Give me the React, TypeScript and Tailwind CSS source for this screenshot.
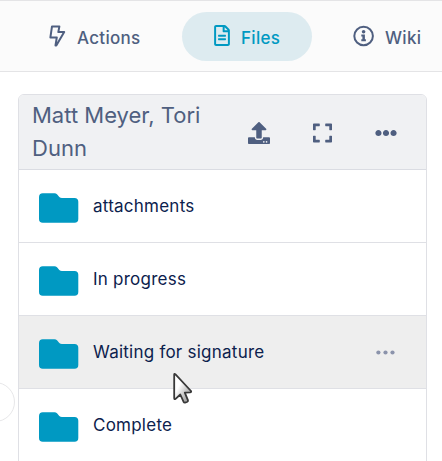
import { FaEllipsisH, FaExpand, FaRegFileAlt, FaUpload } from "react-icons/fa";

const folders = ["attachments", "In progress", "Waiting for signature", "Complete"];

function BoltIcon() {
  return (
    <svg className="mb-px" width="17" height="22" viewBox="0 0 17 22" fill="none" stroke="currentColor" strokeWidth="2" strokeLinejoin="round">
      <path d="M3 1.4H10.4L9.3 7.1H15.2L7.3 20.5H6.5L7.8 12.4H1.4Z" />
    </svg>
  );
}

function InfoIcon() {
  return (
    <svg className="mb-px" width="22" height="22" viewBox="0 0 22 22" fill="none">
      <circle cx="10.6" cy="11" r="9.3" stroke="currentColor" strokeWidth="2" />
      <circle cx="10.6" cy="6.8" r="1.8" fill="currentColor" />
      <path d="M8.3 9.5H11.9V14.3H12.9V16.2H8.3V14.3H9.4V11.4H8.3Z" fill="currentColor" />
    </svg>
  );
}

function FolderIcon() {
  return (
    <svg className="shrink-0" width="40" height="30" viewBox="0 0 40 30">
      <path d="M3.8 0.3H15.5Q17 0.3 18 1.3L20.3 3.9Q21.4 5 23 5H35.5Q39.3 5 39.3 8.8V26Q39.3 29.8 35.5 29.8H3.8Q0 29.8 0 26V4.1Q0 0.3 3.8 0.3Z" fill="#0099c2" />
    </svg>
  );
}

function Pointer() {
  return (
    <svg className="absolute left-[172px] top-[371px]" width="24" height="37" viewBox="0 0 24 37">
      <defs>
        <linearGradient id="pointer-fill" x1="0" y1="0" x2="1" y2="1">
          <stop offset="0.35" stopColor="#ffffff" />
          <stop offset="0.8" stopColor="#a8a8a8" />
        </linearGradient>
      </defs>
      <path d="M2.2 3.2Q2.2 1.6 3.5 2.8L19 19.5Q19.6 20.8 18 20.9L12.8 21.1L16 28.9Q16.2 30 15 30.5L13 31.2Q12 31.3 11.6 30.3L8.3 23L3.6 27.3Q2.2 28.3 2.2 26.5Z" transform="translate(0 0.5)" fill="url(#pointer-fill)" stroke="#383838" strokeWidth="1.8" strokeLinejoin="round" />
    </svg>
  );
}

export default function App() {
  return (
    <div className="relative h-[461px] w-[442px] overflow-hidden bg-white font-['Inter',sans-serif] text-[#4f5f80]">
      <nav className="flex h-[72px] border-y border-[#e4e4e6] bg-[#fbfbfb] pt-[11px] text-[17px] font-medium tracking-[0.3px]">
        <div className="flex h-[49px] w-[182px] items-center pl-[49px]">
          <BoltIcon />
          <span className="ml-[11px] pt-[5px]">Actions</span>
        </div>
        <div className="flex h-[49px] w-[130px] items-center rounded-full bg-[#ddebf0] pl-8 text-[#0099c2]">
          <FaRegFileAlt className="mb-[2px] h-[21px] w-4" />
          <span className="ml-[11px] pt-[5px]">Files</span>
        </div>
        <div className="flex h-[49px] items-center pl-[41px]">
          <InfoIcon />
          <span className="ml-[10px] pt-[5px]">Wiki</span>
        </div>
      </nav>

      <section className="ml-[18px] mt-[22px] h-[380px] w-[409px] overflow-hidden rounded-t-md border border-[#dfe0e5]">
        <header className="flex h-[75px] items-center border-b border-[#dadce2] bg-[#f0f1f3] pl-[13px]">
          <h2 className="w-[216px] pr-8 text-[22px] font-normal leading-[33px]">Matt Meyer, Tori Dunn</h2>
          <FaUpload className="mt-[2px] size-[22px]" />
          <FaExpand className="ml-[43px] mt-[2px] h-[22px] w-[19px]" />
          <FaEllipsisH className="ml-[43px] mt-[2px] size-[22px]" />
        </header>
        <ul>
          {folders.map((name) => (
            <li
              key={name}
              className={`flex h-[73px] items-center border-b border-[#dfe0e5] pl-5 pr-[31px] text-[17px] tracking-[0.24px] text-[#0c214d] ${name === "Waiting for signature" ? "bg-[#eeeeee]" : ""}`}
            >
              <div className="mt-[3px]"><FolderIcon /></div>
              <span className="ml-[14px] pt-[2px]">{name}</span>
              {name === "Waiting for signature" && (
                <svg className="ml-auto" width="19" height="5" viewBox="0 0 19 5" fill="#8b93ab">
                  <circle cx="2.4" cy="2.5" r="2.1" />
                  <circle cx="9.5" cy="2.5" r="2.1" />
                  <circle cx="16.5" cy="2.5" r="2.1" />
                </svg>
              )}
            </li>
          ))}
        </ul>
      </section>

      <div className="absolute left-[-25px] top-[382px] size-10 rounded-full border border-[#e7e7e9]" />
      <Pointer />
    </div>
  );
}
